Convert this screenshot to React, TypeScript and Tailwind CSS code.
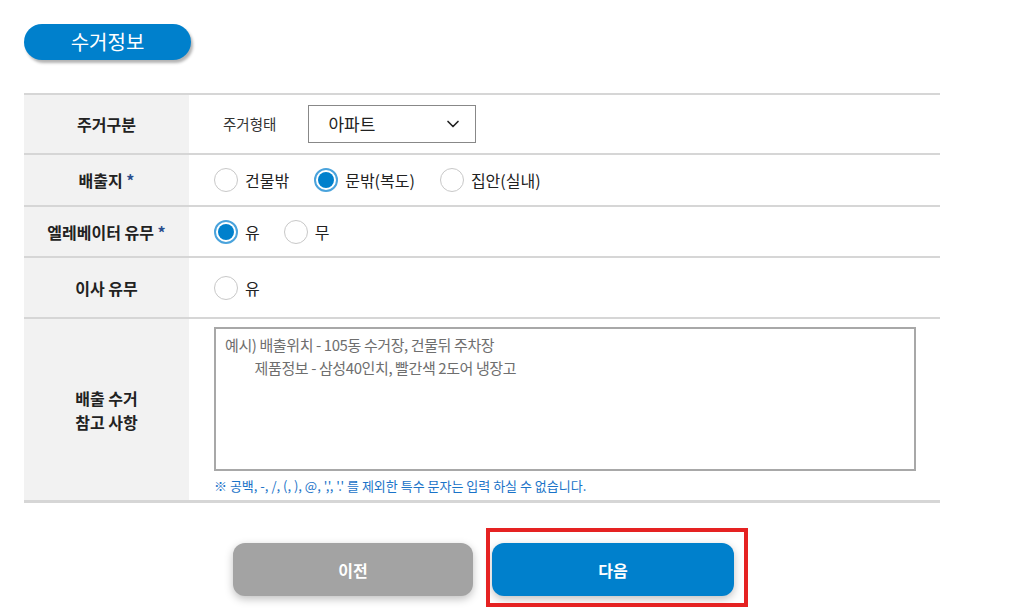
import { ChevronDown } from 'lucide-react';

const font = { fontFamily: '"Noto Sans CJK KR", "Noto Sans", sans-serif' };

const Radio = ({ checked, label }: { checked?: boolean; label: string }) => (
    <label className="flex items-center gap-[7px] text-[16px] text-[#222]">
        {checked ? (
            <span className="w-[24px] h-[24px] rounded-full border-2 border-[#4aa3dc] bg-white flex items-center justify-center">
                <span className="w-[16px] h-[16px] rounded-full bg-[#0080cc]" />
            </span>
        ) : (
            <span className="w-[24px] h-[24px] rounded-full border border-[#c8c8c8] bg-white" />
        )}
        <span>{label}</span>
    </label>
);

const Row = ({ label, height, children }: { label: React.ReactNode; height: string; children: React.ReactNode }) => (
    <div className={`flex border-b-2 border-[#d6d6d6] ${height}`}>
        <div className="w-[165px] bg-[#f2f2f2] flex items-center justify-center text-center text-[16px] font-bold text-[#222] leading-[24px]">
            {label}
        </div>
        <div className="flex-1 flex items-center">{children}</div>
    </div>
);

const App = () => {
    return (
        <div className="w-[1024px] h-[614px] bg-white relative" style={font}>
            <div className="pt-[24px] pl-[24px]">
                <div className="w-[167px] h-[36px] rounded-full bg-[#0080cc] text-white text-[20px] flex items-center justify-center shadow-[2px_3px_3px_rgba(0,0,0,0.3)]">
                    수거정보
                </div>
            </div>

            <div className="mt-[33px] ml-[24px] w-[916px] border-t-2 border-[#d6d6d6]">
                <Row label="주거구분" height="h-[60px]">
                    <span className="ml-[34px] text-[14.5px] text-[#333]">주거형태</span>
                    <div className="ml-[32px] w-[168px] h-[38px] border border-[#888] flex items-center justify-between pl-[19px] pr-[12px] text-[17px] text-[#222]">
                        <span>아파트</span>
                        <ChevronDown size={20} strokeWidth={2} className="text-[#222]" />
                    </div>
                </Row>
                <Row label={<span>배출지 <span className="text-[#2b4f8e]">*</span></span>} height="h-[52px]">
                    <div className="ml-[25px] flex items-center gap-[25px]">
                        <Radio label="건물밖" />
                        <Radio checked label="문밖(복도)" />
                        <Radio label="집안(실내)" />
                    </div>
                </Row>
                <Row label={<span>엘레베이터 유무 <span className="text-[#2b4f8e]">*</span></span>} height="h-[51px]">
                    <div className="ml-[25px] flex items-center gap-[24px]">
                        <Radio checked label="유" />
                        <Radio label="무" />
                    </div>
                </Row>
                <Row label="이사 유무" height="h-[61px]">
                    <div className="ml-[25px] flex items-center">
                        <Radio label="유" />
                    </div>
                </Row>
                <div className="flex border-b-[3px] border-[#d6d6d6] h-[184px]">
                    <div className="w-[165px] bg-[#f2f2f2] flex items-center justify-center text-center text-[16px] font-bold text-[#222] leading-[24px]">
                        배출 수거
                        <br />
                        참고 사항
                    </div>
                    <div className="flex-1 pt-[8px] pl-[25px]">
                        <div className="w-[702px] h-[144px] border-2 border-[#a8a8a8] px-[9px] pt-[4px] text-[15px] leading-[23px] text-[#6e6e6e] whitespace-pre tracking-[-0.4px]">
                            {'예시) 배출위치 - 105동 수거장, 건물뒤 주차장\n          제품정보 - 삼성40인치, 빨간색 2도어 냉장고'}
                        </div>
                        <div className="mt-[5px] text-[13px] text-[#1a73c8]">
                            ※ 공백, -, /, (, ), @, ',', '.' 를 제외한 특수 문자는 입력 하실 수 없습니다.
                        </div>
                    </div>
                </div>
            </div>

            <div className="mt-[40px] pl-[233px] flex gap-[19px]">
                <button className="w-[240px] h-[53px] rounded-[12px] bg-[#a3a3a3] text-white text-[16px] font-bold shadow-[0_3px_8px_rgba(0,0,0,0.25)]">
                    이전
                </button>
                <div className="relative">
                    <button className="w-[242px] h-[53px] rounded-[12px] bg-[#0080cc] text-white text-[16px] font-bold shadow-[0_3px_8px_rgba(0,0,0,0.25)]">
                        다음
                    </button>
                    <div className="absolute left-[-6px] top-[-15px] w-[262px] h-[79px] border-4 border-[#e52222]" />
                </div>
            </div>
        </div>
    );
};

export default App;
